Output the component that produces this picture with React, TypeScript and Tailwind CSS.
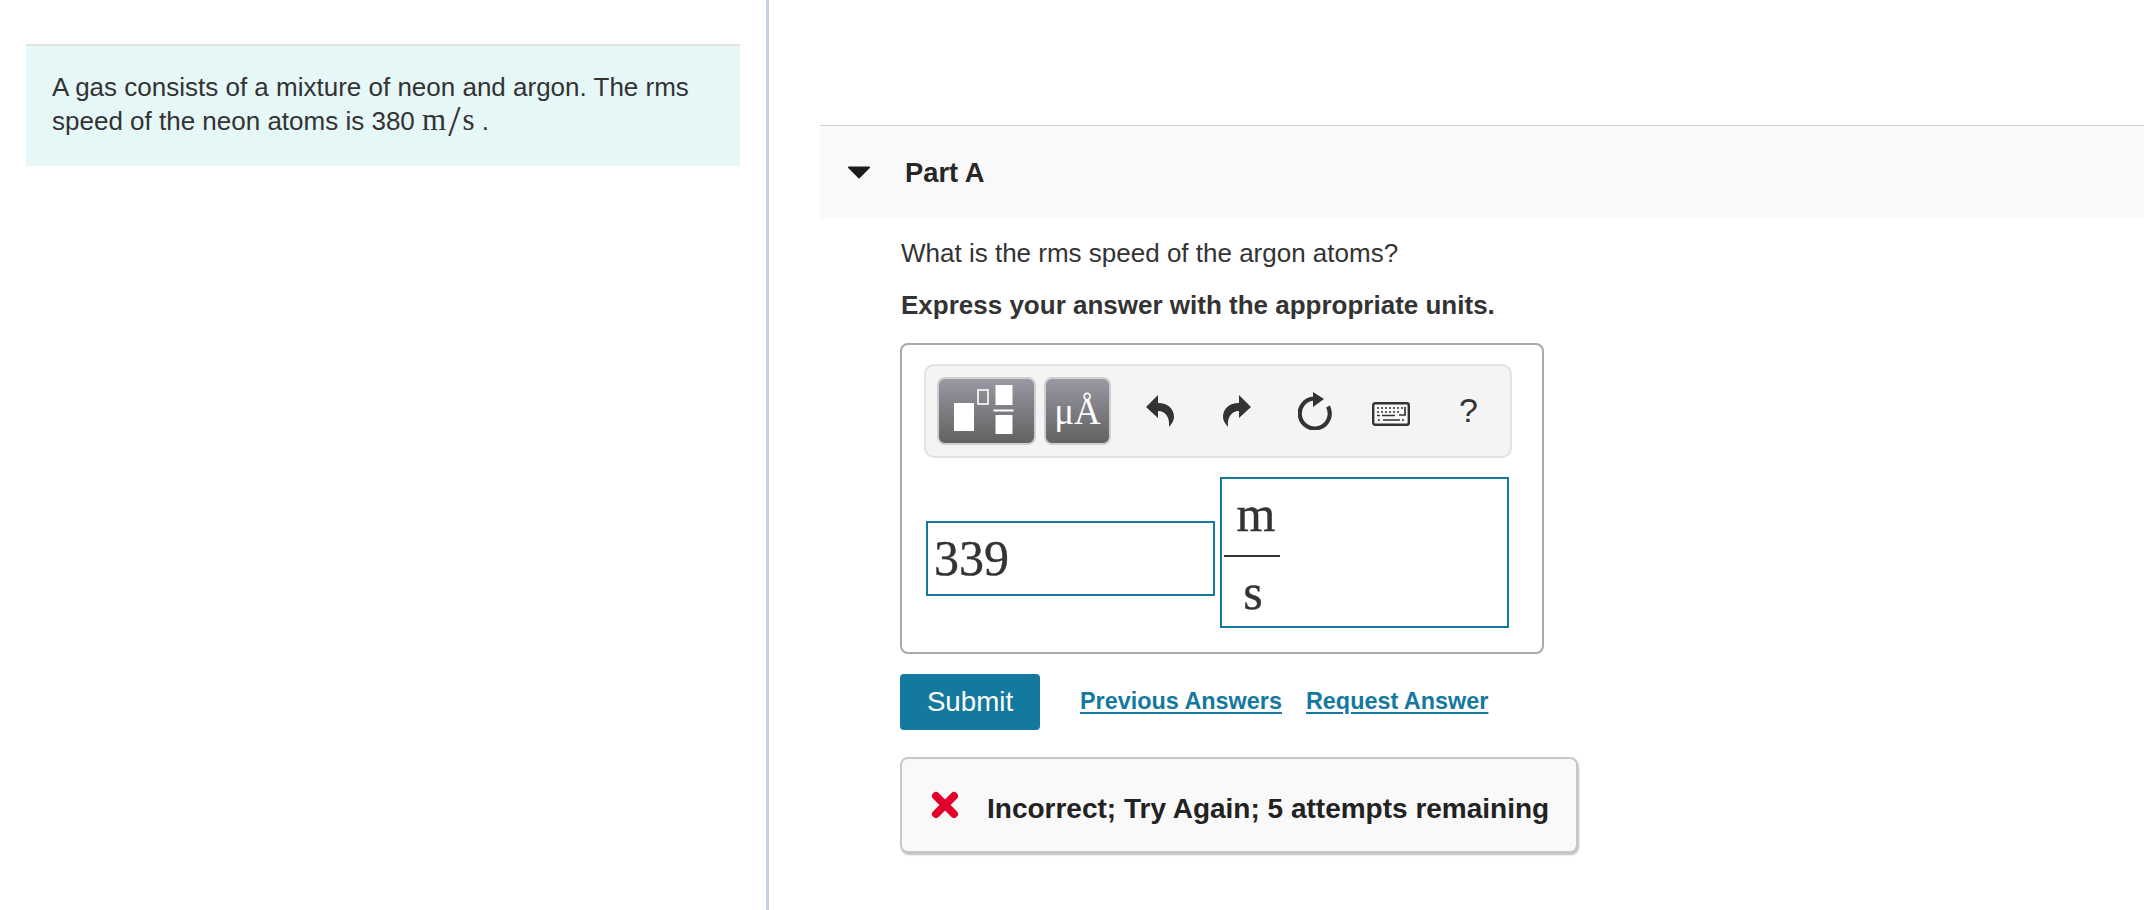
export default function App() {
  const sans = "font-['Liberation_Sans',Arial,sans-serif]";
  return (
    <div className={`${sans} flex h-[910px] w-[2144px] overflow-hidden bg-white text-[#333]`}>
      <div className="w-[769px] shrink-0 border-r-[3px] border-[#c4d1e4] pl-[26px] pr-[26px] pt-[44px]">
        <div className="h-[122px] border-t-2 border-[#e0e3e3] bg-[#e6f7f7] pl-[26px] pr-[20px] pt-[24px] text-[26px] leading-[34px]">
          <div>A gas consists of a mixture of neon and argon. The rms</div>
          <div className="flex h-[34px] items-baseline whitespace-pre">
            <span>speed of the neon atoms is 380 </span>
            <span className="font-['Liberation_Serif',serif] text-[31px] leading-[20px]">m</span>
            <span className="translate-y-[6px] px-[2px] font-['Liberation_Serif',serif] text-[44px] leading-[20px]">/</span>
            <span className="font-['Liberation_Serif',serif] text-[31px] leading-[20px]">s</span>
            <span> .</span>
          </div>
        </div>
      </div>
      <div className="min-w-0 flex-1 pl-[51px] pt-[125px]">
        <div className="flex h-[93px] items-center border-t border-[#d0d0d0] bg-[#f9f9f9]">
          <svg width="22" height="14" viewBox="0 0 22 14" className="ml-[28px]">
            <path d="M1 1.5h20a1 1 0 0 1 .8 1.6L11.8 13a1 1 0 0 1-1.6 0L.2 3.1A1 1 0 0 1 1 1.5z" fill="#1c1c1c" />
          </svg>
          <span className="ml-[35px] pt-[2px] text-[27.3px] font-bold text-[#262626]">Part A</span>
        </div>
        <div className="pl-[80px]">
          <p className="ml-[1px] mt-[18px] text-[26px] leading-[34px] text-[#333]">What is the rms speed of the argon atoms?</p>
          <p className="ml-[1px] mt-[18px] text-[26px] font-bold leading-[34px] text-[#333]">Express your answer with the appropriate units.</p>
          <div className="mt-[21px] h-[311px] w-[644px] rounded-[8px] border-2 border-[#a9a9a9] pl-[22px] pt-[19px]">
            <div className="flex h-[94px] w-[588px] items-center rounded-[10px] border-2 border-[#e2e2e2] bg-[#f4f4f4] pl-[11px]">
              <div className="flex h-[68px] w-[99px] items-center justify-center rounded-[8px] border-2 border-[#cfcfcf] bg-gradient-to-b from-[#9a98a3] to-[#626262]">
                <svg width="66" height="54" viewBox="0 0 66 54">
                  <rect x="0" y="19" width="20" height="28" fill="#fff" />
                  <rect x="24" y="6" width="10" height="14" fill="none" stroke="#e8e8e8" strokeWidth="2" />
                  <rect x="41.500" y="1" width="17" height="20" fill="#fff" />
                  <rect x="39.500" y="25.500" width="20" height="2" fill="#fff" />
                  <rect x="41.500" y="31" width="17" height="19" fill="#fff" />
                </svg>
              </div>
              <div className="ml-[8px] flex h-[68px] w-[67px] items-end justify-center rounded-[8px] border-2 border-[#cfcfcf] bg-gradient-to-b from-[#9a98a3] to-[#626262] pb-[13px] font-['Liberation_Serif',serif] text-[37px] leading-[37px] text-white">
                <span>μÅ</span>
              </div>
              <svg width="28" height="32" viewBox="0 0 28 32" className="ml-[35px]">
                <path d="M0 12L12 0v8c10 0 16 6 16 14 0 3-2 7-5 10 1-9-3-16-11-16v7z" fill="#333" />
              </svg>
              <svg width="28" height="32" viewBox="0 0 28 32" className="ml-[49px]">
                <path d="M28 12L16 0v8C6 8 0 14 0 22c0 3 2 7 5 10-1-9 3-16 11-16v7z" fill="#333" />
              </svg>
              <svg width="34" height="38" viewBox="0 0 34 38" className="ml-[47px]">
                <path d="M16 6.500a15 15 0 1 0 14 8" fill="none" stroke="#333" strokeWidth="4.200" />
                <path d="M15 0l11 7-11 8z" fill="#333" />
              </svg>
              <svg width="38" height="24" viewBox="0 0 38 24" className="ml-[40px] mt-[6px]">
                <rect x="1.200" y="1.200" width="35.600" height="21.600" rx="2" fill="#f8f8f8" stroke="#333" strokeWidth="2.400" />
                <path d="M5 6h2M9 6h2M13 6h2M17 6h2M21 6h2M25 6h2M29 6h2M5 10h2M9 10h2M13 10h2M17 10h2M21 10h2M25 10h2M33 5v8h-6M5 13.500h3M10 13.500h13M6 18h2M11 18h17M30 18h2" stroke="#333" strokeWidth="1.700" fill="none" />
              </svg>
              <span className="ml-[49px] mb-[2px] text-[34px] leading-[40px] text-[#333]">?</span>
            </div>
            <div className="mt-[19px] ml-[2px] flex items-center gap-[5px]">
              <div className="mt-[11px] flex h-[75px] w-[289px] items-center border-2 border-[#14799c] pl-[6px] font-['Liberation_Serif',serif] text-[50px] text-[#333] [-webkit-text-stroke:0.4px_#333]">339</div>
              <div className="flex h-[151px] w-[289px] flex-col items-start justify-center border-2 border-[#14799c] pl-[2px] font-['Liberation_Serif',serif] text-[50px] leading-[70px] text-[#333] [-webkit-text-stroke:0.4px_#333]">
                <div className="flex w-[56px] justify-center border-b-2 border-[#333] pb-[6px] pl-[8px]">m</div>
                <div className="flex w-[56px] justify-center pl-[2px]">s</div>
              </div>
            </div>
          </div>
          <div className="mt-[20px] flex items-center">
            <div className="flex h-[56px] w-[140px] items-center justify-center rounded-[4px] bg-[#14799e] text-[27.7px] text-white">Submit</div>
            <a className="ml-[40px] text-[23.4px] font-bold text-[#14799e] underline underline-offset-[3px]">Previous Answers</a>
            <a className="ml-[24px] text-[23.4px] font-bold text-[#14799e] underline underline-offset-[3px]">Request Answer</a>
          </div>
          <div className="mt-[27px] flex h-[96px] w-[678px] items-center rounded-[8px] border-2 border-[#c8c8c8] bg-[#f9f9f9] shadow-[1px_2px_2px_rgba(0,0,0,0.25)]">
            <svg width="28" height="28" viewBox="0 0 28 28" className="ml-[29px]">
              <path d="M5 5l18 18M23 5L5 23" stroke="#e0002b" strokeWidth="8" strokeLinecap="round" fill="none" />
            </svg>
            <span className="ml-[28px] pt-[7px] text-[28px] font-bold text-[#222]">Incorrect; Try Again; 5 attempts remaining</span>
          </div>
        </div>
      </div>
    </div>
  );
}
